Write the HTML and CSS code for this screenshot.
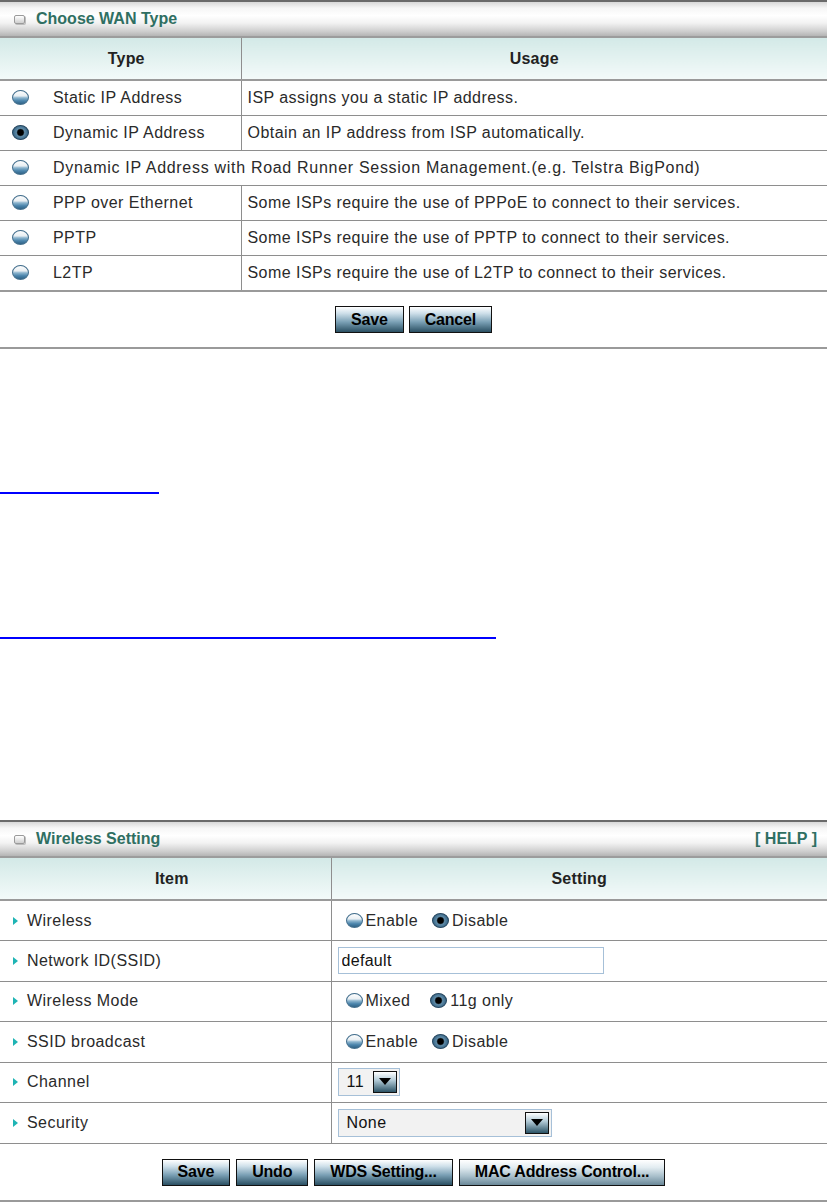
FILE: index.html
```html
<!DOCTYPE html>
<html lang="en">

<head>
    <meta charset="UTF-8">
    <title>Router Setup</title>
    <link rel="stylesheet" href="styles.css">
</head>

<body>
    <div class="panel wan">
        <div class="panel-head">
            <span class="head-icon"></span>
            <span class="head-title">Choose WAN Type</span>
        </div>
        <table class="grid">
            <tr class="thead">
                <th class="col-type">Type</th>
                <th>Usage</th>
            </tr>
            <tr>
                <td class="col-type"><span class="radio"></span>Static IP Address</td>
                <td>ISP assigns you a static IP address.</td>
            </tr>
            <tr>
                <td class="col-type"><span class="radio on"></span>Dynamic IP Address</td>
                <td>Obtain an IP address from ISP automatically.</td>
            </tr>
            <tr>
                <td colspan="2" class="col-type span"><span class="radio"></span>Dynamic IP Address with Road Runner Session Management.(e.g. Telstra BigPond)</td>
            </tr>
            <tr>
                <td class="col-type"><span class="radio"></span>PPP over Ethernet</td>
                <td>Some ISPs require the use of PPPoE to connect to their services.</td>
            </tr>
            <tr>
                <td class="col-type"><span class="radio"></span>PPTP</td>
                <td>Some ISPs require the use of PPTP to connect to their services.</td>
            </tr>
            <tr>
                <td class="col-type"><span class="radio"></span>L2TP</td>
                <td>Some ISPs require the use of L2TP to connect to their services.</td>
            </tr>
        </table>
        <div class="btn-row">
            <button class="btn">Save</button>
            <button class="btn">Cancel</button>
        </div>
    </div>

    <div class="links">
        <a href="#" class="blank-link short">&nbsp;</a>
        <a href="#" class="blank-link long">&nbsp;</a>
    </div>

    <div class="panel wireless">
        <div class="panel-head">
            <span class="head-icon"></span>
            <span class="head-title">Wireless Setting</span>
            <span class="head-help">[ HELP ]</span>
        </div>
        <table class="grid">
            <tr class="thead">
                <th class="col-item">Item</th>
                <th>Setting</th>
            </tr>
            <tr>
                <td class="col-item"><span class="arrow"></span>Wireless</td>
                <td class="setting">
                    <span class="radio"></span>Enable
                    <span class="radio on gap"></span>Disable
                </td>
            </tr>
            <tr>
                <td class="col-item"><span class="arrow"></span>Network ID(SSID)</td>
                <td class="setting"><input type="text" class="field" value="default"></td>
            </tr>
            <tr>
                <td class="col-item"><span class="arrow"></span>Wireless Mode</td>
                <td class="setting">
                    <span class="radio"></span>Mixed
                    <span class="radio on gap wide"></span>11g only
                </td>
            </tr>
            <tr>
                <td class="col-item"><span class="arrow"></span>SSID broadcast</td>
                <td class="setting">
                    <span class="radio"></span>Enable
                    <span class="radio on gap"></span>Disable
                </td>
            </tr>
            <tr>
                <td class="col-item"><span class="arrow"></span>Channel</td>
                <td class="setting">
                    <span class="select small"><span class="select-val">11</span><span class="select-btn"></span></span>
                </td>
            </tr>
            <tr>
                <td class="col-item"><span class="arrow"></span>Security</td>
                <td class="setting">
                    <span class="select big"><span class="select-val">None</span><span class="select-btn"></span></span>
                </td>
            </tr>
        </table>
        <div class="btn-row">
            <button class="btn">Save</button>
            <button class="btn">Undo</button>
            <button class="btn">WDS Setting...</button>
            <button class="btn light">MAC Address Control...</button>
        </div>
    </div>
</body>

</html>
```

FILE: styles.css
```css
* {
    margin: 0;
    padding: 0;
    box-sizing: border-box;
}

body {
    width: 827px;
    background: #fff;
    font-family: 'Liberation Sans', Arial, sans-serif;
    font-size: 16px;
    letter-spacing: 0.45px;
    color: #2a2a2a;
}

.panel {
    width: 827px;
    border-bottom: 2px solid #9a9a9a;
}

.panel-head {
    height: 38px;
    display: flex;
    align-items: center;
    padding: 0 10px 0 14px;
    border-top: 2px solid #6a6a6a;
    border-bottom: 2px solid #9c9c9c;
    background: linear-gradient(#d8d8d8 0%, #f6f6f6 18%, #ffffff 40%, #f2f2f2 62%, #d0d0d0 85%, #b4b4b4 100%);
}

.head-icon {
    width: 11px;
    height: 9px;
    margin-right: 11px;
    border: 1px solid #9a9a9a;
    border-radius: 2px;
    background: linear-gradient(#ffffff, #cfcfcf);
    box-shadow: 1px 1px 0 #bdbdbd;
}

.head-title {
    font-weight: bold;
    font-size: 16px;
    letter-spacing: 0;
    color: #2f6f62;
}

.head-help {
    margin-left: auto;
    font-weight: bold;
    font-size: 16px;
    letter-spacing: 0;
    color: #2f6f62;
}

.grid {
    width: 100%;
    border-collapse: collapse;
}

.grid th {
    height: 42px;
    font-size: 16px;
    font-weight: bold;
    letter-spacing: 0.2px;
    color: #222;
    background: linear-gradient(#d3e9e7, #f3faf9);
    border-bottom: 2px solid #9a9a9a;
}

.grid td {
    height: 35px;
    padding: 0 6px;
    border-top: 1px solid #8e8e8e;
    white-space: nowrap;
}

.grid tr:nth-child(2) td {
    border-top: none;
}

.grid .col-type,
.grid .col-item {
    border-right: 1px solid #8e8e8e;
}

.grid .col-type.span {
    border-right: none;
    letter-spacing: 0.7px;
}

.wan .col-type {
    width: 241px;
    padding-left: 12px;
}

.wan .col-type .radio {
    margin-right: 24px;
}

.wireless .grid td {
    height: 40.5px;
}

.wireless .col-item {
    width: 331px;
    padding-left: 13px;
}

.wireless .setting {
    padding-left: 6px;
}

.arrow {
    display: inline-block;
    width: 0;
    height: 0;
    margin-right: 9px;
    border-top: 4px solid transparent;
    border-bottom: 4px solid transparent;
    border-left: 5px solid #1eb4b4;
    vertical-align: 1px;
}

.radio {
    display: inline-block;
    width: 17px;
    height: 15px;
    border-radius: 50%;
    vertical-align: -2px;
    background: linear-gradient(#fdfdfd 0%, #e9eff3 38%, #8fb6cf 52%, #4b85ac 75%, #2f6286 100%);
    border: 1px solid #45708e;
}

.radio.on {
    background: radial-gradient(circle at 50% 50%, #000 0%, #000 28%, #5f8aa6 42%, #3e6c8c 70%, #1f4058 100%);
    border-color: #274760;
}

.setting .radio {
    margin-left: 8px;
    margin-right: 3px;
}

.setting .radio.gap {
    margin-left: 9px;
}

.setting .radio.wide {
    margin-left: 15px;
}

.field {
    width: 266px;
    height: 27px;
    padding: 0 3px;
    border: 1px solid #a6c0d8;
    font-family: 'Liberation Sans', Arial, sans-serif;
    font-size: 16px;
    letter-spacing: 0.3px;
    color: #111;
    vertical-align: middle;
}

.select {
    display: inline-flex;
    align-items: center;
    height: 28px;
    padding: 2px;
    border: 1px solid #a6c0d8;
    background: #f2f2f2;
    vertical-align: middle;
}

.select.small {
    width: 62px;
}

.select.big {
    width: 214px;
}

.select-val {
    flex: 1;
    padding-left: 6px;
    color: #111;
}

.select-btn {
    position: relative;
    width: 24px;
    height: 22px;
    border: 1px solid #111;
    background: linear-gradient(#ffffff 0%, #b5cdd9 40%, #2b5366 100%);
}

.select-btn::after {
    content: "";
    position: absolute;
    left: 5px;
    top: 6px;
    border-left: 6px solid transparent;
    border-right: 6px solid transparent;
    border-top: 7px solid #000;
}

.btn-row {
    height: 57px;
    display: flex;
    justify-content: center;
    align-items: center;
    gap: 5px;
    border-top: 1px solid #8e8e8e;
}

.wan .btn-row {
    border-top: 2px solid #9a9a9a;
}

.wireless .btn-row {
    gap: 6px;
}

.btn {
    height: 27px;
    padding: 0 15px;
    border: 1px solid #111;
    font-family: 'Liberation Sans', Arial, sans-serif;
    font-size: 16px;
    font-weight: bold;
    letter-spacing: -0.2px;
    color: #000;
    background: linear-gradient(#ffffff 0%, #cfe0ea 25%, #7aa0b5 60%, #2a4f62 100%);
    cursor: pointer;
}

.btn.light {
    background: linear-gradient(#ffffff 0%, #e2ecf1 30%, #a8bfcb 65%, #6a8898 100%);
}

.links {
    height: 471px;
    padding-top: 128px;
}

.blank-link {
    display: block;
    height: 17px;
    border-bottom: 2px solid #0000ff;
    text-decoration: none;
}

.blank-link.short {
    width: 159px;
}

.blank-link.long {
    width: 496px;
    margin-top: 128px;
}
```
